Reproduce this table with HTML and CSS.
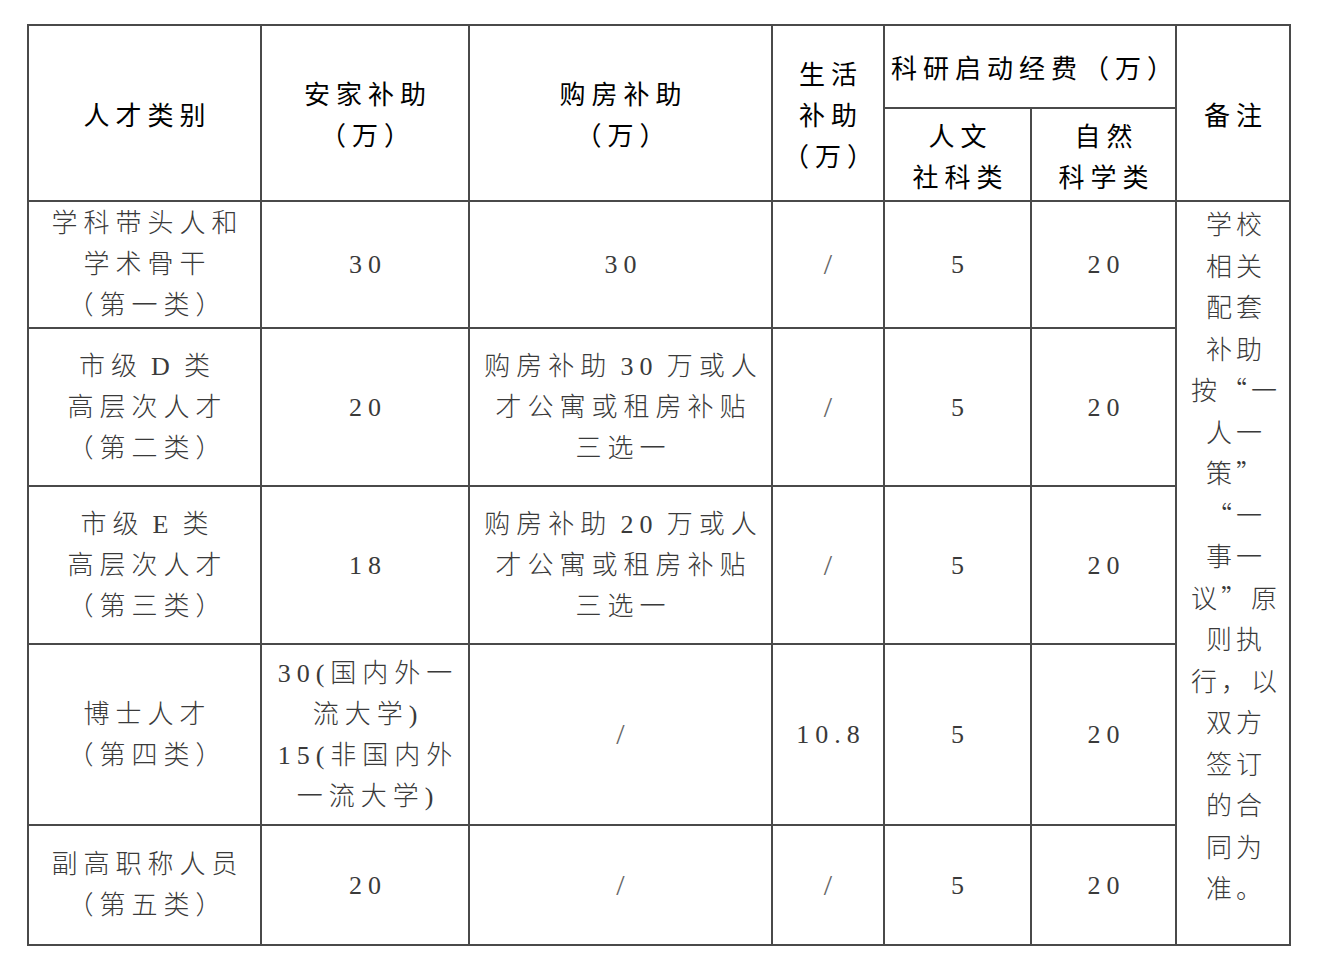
FILE: index.html
```html
<!DOCTYPE html>
<html lang="zh-CN">
<head>
<meta charset="utf-8">
<link rel="stylesheet" href="styles.css">
</head>
<body>
<table class="grid">
  <colgroup>
    <col class="c1"><col class="c2"><col class="c3"><col class="c4"><col class="c5"><col class="c6"><col class="c7">
  </colgroup>
  <thead>
    <tr class="h1">
      <th rowspan="2">人才类别</th>
      <th rowspan="2">安家补助<br>（万）</th>
      <th rowspan="2">购房补助<br>（万）</th>
      <th rowspan="2">生活<br>补助<br>（万）</th>
      <th colspan="2">科研启动经费（万）</th>
      <th rowspan="2">备注</th>
    </tr>
    <tr class="h2">
      <th>人文<br>社科类</th>
      <th>自然<br>科学类</th>
    </tr>
  </thead>
  <tbody>
    <tr class="r1">
      <td>学科带头人和<br>学术骨干<br>（第一类）</td>
      <td>30</td>
      <td>30</td>
      <td><span class="slash">/</span></td>
      <td>5</td>
      <td>20</td>
      <td rowspan="5" class="note">学校<br>相关<br>配套<br>补助<br>按“一<br>人一<br>策”<br>“一<br>事一<br>议”原<br>则执<br>行，以<br>双方<br>签订<br>的合<br>同为<br>准。</td>
    </tr>
    <tr class="r2">
      <td>市级&#8202;D&#8202;类<br>高层次人才<br>（第二类）</td>
      <td>20</td>
      <td>购房补助&#8202;30&#8202;万或人<br>才公寓或租房补贴<br>三选一</td>
      <td><span class="slash">/</span></td>
      <td>5</td>
      <td>20</td>
    </tr>
    <tr class="r3">
      <td>市级&#8202;E&#8202;类<br>高层次人才<br>（第三类）</td>
      <td>18</td>
      <td>购房补助&#8202;20&#8202;万或人<br>才公寓或租房补贴<br>三选一</td>
      <td><span class="slash">/</span></td>
      <td>5</td>
      <td>20</td>
    </tr>
    <tr class="r4">
      <td>博士人才<br>（第四类）</td>
      <td>30(国内外一<br>流大学)<br>15(非国内外<br>一流大学)</td>
      <td><span class="slash">/</span></td>
      <td>10.8</td>
      <td>5</td>
      <td>20</td>
    </tr>
    <tr class="r5">
      <td>副高职称人员<br>（第五类）</td>
      <td>20</td>
      <td><span class="slash">/</span></td>
      <td><span class="slash">/</span></td>
      <td>5</td>
      <td>20</td>
    </tr>
  </tbody>
</table>
</body>
</html>
```

FILE: styles.css
```css
html, body {
  margin: 0;
  padding: 0;
  background: #ffffff;
}
body {
  padding: 24px 0 0 27px;
  font-family: "Noto Sans CJK SC", "Noto Sans", sans-serif;
}
.grid {
  border-collapse: collapse;
  table-layout: fixed;
  width: 1264px;
}
.c1 { width: 233px; }
.c2 { width: 208px; }
.c3 { width: 303px; }
.c4 { width: 112px; }
.c5 { width: 147px; }
.c6 { width: 145px; }
.c7 { width: 114px; }
.grid th, .grid td {
  border: 2px solid #4a4a4a;
  padding: 0 0 0 6px;
  text-align: center;
  vertical-align: middle;
  font-size: 26px;
  line-height: 41px;
  letter-spacing: 6px;
  white-space: nowrap;
}
.grid th {
  font-weight: 400;
  color: #000000;
}
.grid td {
  font-family: "Liberation Serif", "Noto Sans CJK SC", serif;
  font-size: 26px;
  font-weight: 300;
  color: #3a3a3a;
}
.slash {
  font-family: "Liberation Serif", serif;
  font-size: 30px;
  color: #666666;
}
.h1 { height: 83px; }
.h2 { height: 93px; }
.r1 { height: 127px; }
.r2 { height: 158px; }
.r3 { height: 158px; }
.r4 { height: 181px; }
.r5 { height: 120px; }
.grid td.note {
  font-family: "Noto Sans CJK SC", sans-serif;
  vertical-align: top;
  letter-spacing: 4px;
  line-height: 41.5px;
}
```
